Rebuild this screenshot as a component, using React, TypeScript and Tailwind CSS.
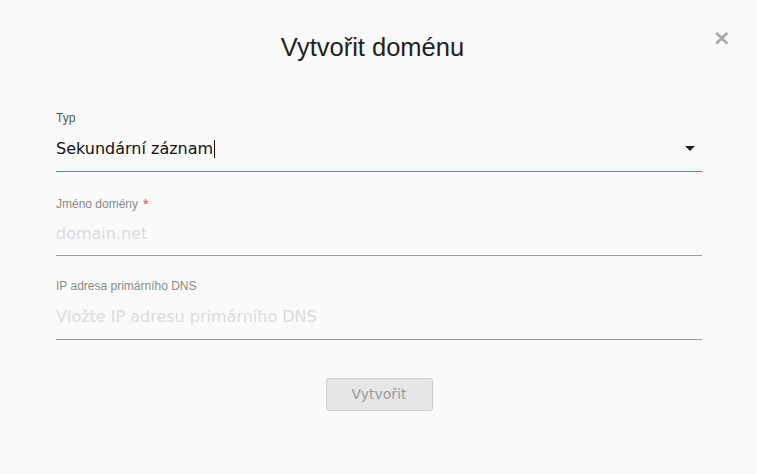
const Field = ({
	label,
	required,
	className,
	labelColor = "text-[#8a8a8a]",
	children,
}: {
	label: string;
	required?: boolean;
	className?: string;
	labelColor?: string;
	children: React.ReactNode;
}) => {
	return (
		<div className={className}>
			<div className={`flex h-[16px] items-center gap-[5px] text-[12px] font-['Liberation_Sans',sans-serif] ${labelColor}`}>
				<span>{label}</span>
				{required && <span className="text-[#f44336] text-[14px] leading-none">*</span>}
			</div>
			{children}
		</div>
	);
};

export default function App() {
	return (
		<div className="relative h-[474px] w-[757px] bg-[#fafafa] font-['DejaVu_Sans',sans-serif]">
			<button className="absolute right-[26px] top-[27px] text-[22px] font-bold leading-none text-[#a8a8a8] font-['DejaVu_Sans',sans-serif]">
				×
			</button>
			<h1 className="pt-[32px] pr-[12px] text-center text-[25.5px] leading-[31px] text-[#222] font-['Liberation_Sans',sans-serif]">
				Vytvořit doménu
			</h1>

			<div className="ml-[56px] mt-[47px] w-[646px]">
				<Field label="Typ" labelColor="text-[#555]">
					<div className="flex h-[46px] items-center border-b border-[#26a69a] text-[16px] text-[#111]">
						<span>Sekundární záznam</span>
						<span className="ml-[1px] h-[18px] w-[1px] bg-[#111]" />
						<span className="ml-auto mr-[7px] h-0 w-0 border-x-[5px] border-t-[5px] border-x-transparent border-t-[#222]" />
					</div>
				</Field>

				<Field label="Jméno domény" required className="mt-[24px]">
					<div className="flex h-[44px] items-center border-b border-[#9a9a9a] text-[16px] text-[#dcdcdc]">
						domain.net
					</div>
				</Field>

				<Field label="IP adresa primárního DNS" className="mt-[22px]">
					<div className="flex h-[46px] items-center border-b border-[#9a9a9a] text-[16px] text-[#dcdcdc]">
						Vložte IP adresu primárního DNS
					</div>
				</Field>

				<div className="mt-[38px] flex justify-center">
					<button className="h-[33px] w-[107px] rounded-[3px] border border-[#cfcfcf] bg-[#e6e6e6] text-[14px] text-[#9a9a9a]">
						Vytvořit
					</button>
				</div>
			</div>
		</div>
	);
}
